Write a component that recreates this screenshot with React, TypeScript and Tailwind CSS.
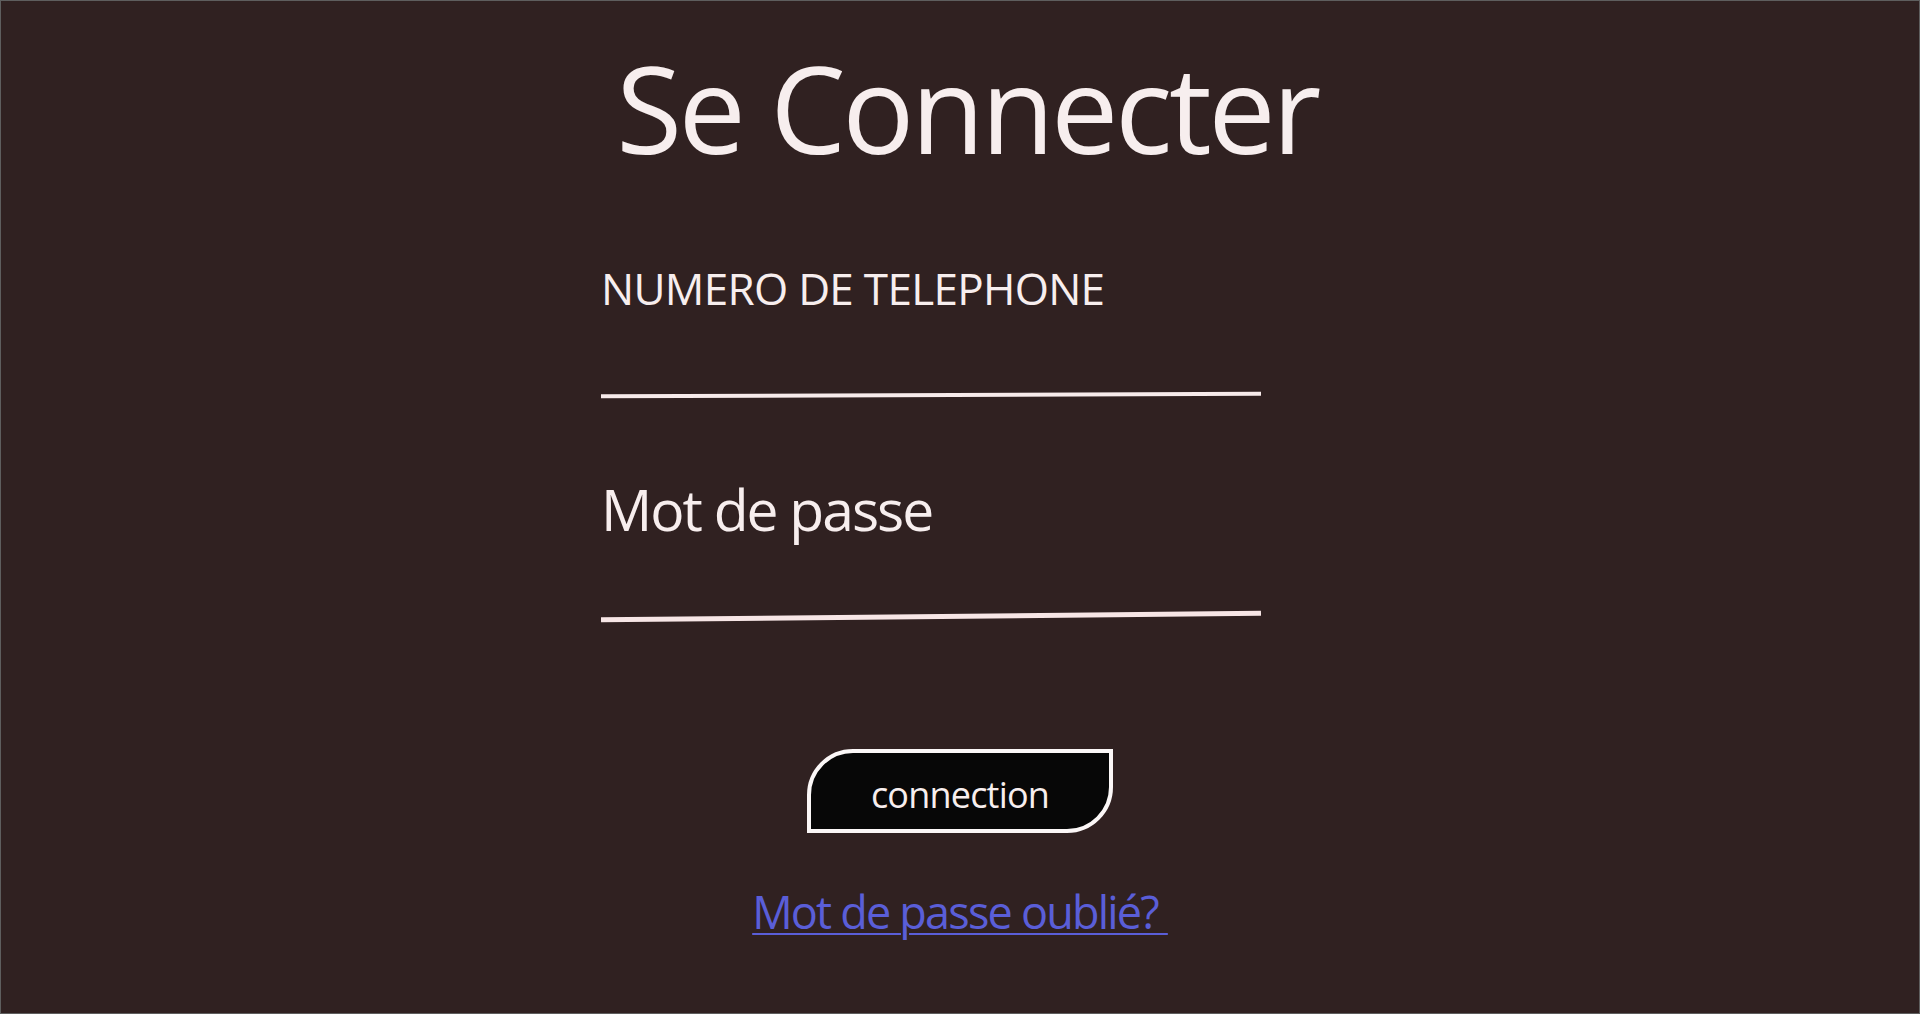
import React from "react";

export default function App() {
  return (
    <div
      className="w-full h-[1014px] bg-[#302121] border border-[#5e5e5e] overflow-hidden flex flex-col"
      style={{ fontFamily: '"Open Sans", "Noto Sans", sans-serif' }}
    >
      <h1 className="mt-[47px] pl-[14px] text-center text-[120px] leading-none font-normal tracking-[-3.5px] text-[#f7eeee]">
        Se Connecter
      </h1>

      <div className="ml-[600px] w-[660px] flex flex-col">
        <label className="mt-[98px] text-[44px] leading-none tracking-[-0.7px] text-[#f7eeee] uppercase">
          NUMERO DE TELEPHONE
        </label>
        <div className="mt-[83px] h-[4px] w-[660px] bg-[#f7ebeb] -rotate-[0.22deg]" />

        <label className="mt-[84px] text-[57px] leading-none tracking-[-2px] text-[#f7eeee]">
          Mot de passe
        </label>
        <div className="mt-[76px] h-[5px] w-[660px] bg-[#f7e6e6] -rotate-[0.56deg]" />
      </div>

      <div className="mt-[130px] flex justify-center">
        <button className="w-[306px] h-[84px] pt-[8px] bg-[#070707] border-4 border-[#fbf7f7] rounded-tl-[46px] rounded-br-[46px] flex items-center justify-center text-[36px] leading-none tracking-[-0.8px] text-[#f7eeee]">
          connection
        </button>
      </div>

      <div className="mt-[56px] flex justify-center">
        <a
          href="#"
          className="text-[45px] leading-none tracking-[-1.8px] text-[#5a5ed8] underline decoration-2 underline-offset-[4px]"
        >
          {"Mot de passe oublié?\u00a0"}
        </a>
      </div>
    </div>
  );
}
